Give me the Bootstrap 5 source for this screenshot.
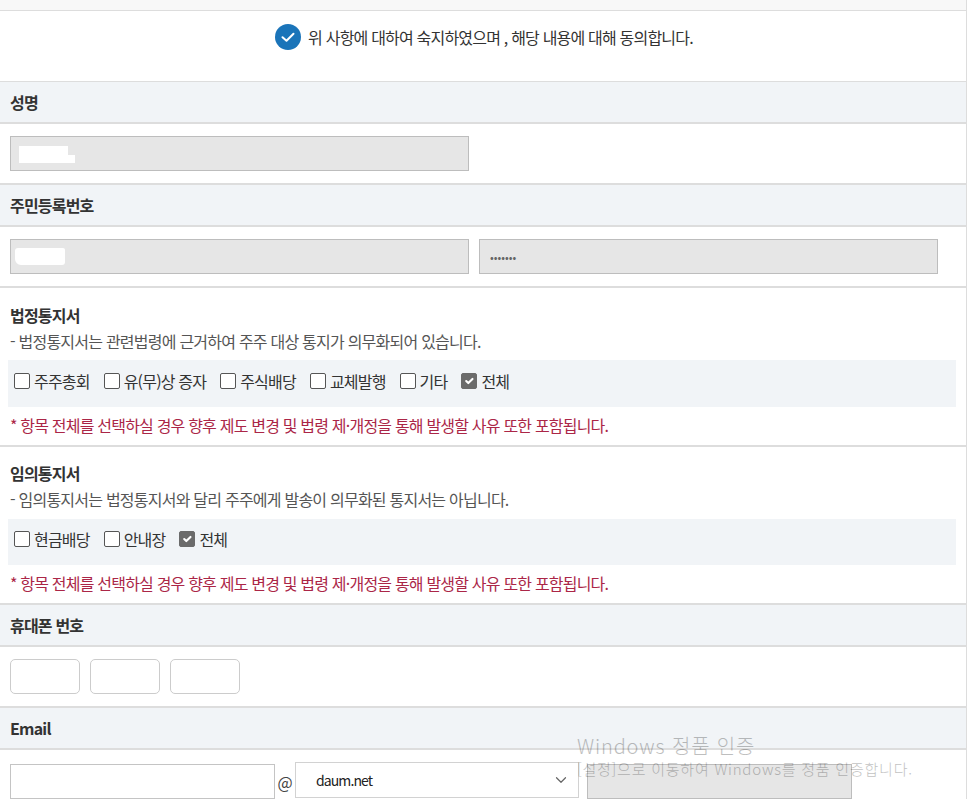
<!DOCTYPE html>
<html lang="ko">
<head>
<meta charset="utf-8">
<title>통지서 수신 동의</title>
<link rel="stylesheet" href="https://cdn.jsdelivr.net/npm/bootstrap@5.3.0/dist/css/bootstrap.min.css">
<style>
html, body { height: 811px; overflow: hidden; background: #fff; }
body { font-family: "Noto Sans CJK KR", "Noto Sans", sans-serif; font-size: 16px; color: #333; letter-spacing: -0.8px; line-height: 22px; }
.sheet { width: 967px; border-right: 1px solid #ddd; }
.topstrip { height: 11px; background: #f8f8f8; border-bottom: 1px solid #ddd; }
.agree { height: 70px; padding-bottom: 18px; padding-left: 2px; color: #333; gap: 7px; }
.agree svg { flex: none; }
.head-row { height: 44px; padding: 0 10px; background: #f1f4f7; border-top: 2px solid #ddd; border-bottom: 2px solid #ddd; font-weight: 700; color: #333; }
.head-first { height: 43px; border-top-width: 1px; }
.entry { padding: 12px 10px; gap: 10px; height: 59px; }
.fld { height: 35px; border-radius: 0; font-size: 13px; padding: 0 10px; border: 1px solid #c4c4c4; letter-spacing: 0; color: #333; }
.fld[readonly] { background: #e6e6e6; border-color: #bdbdbd; }
.fld-secret { color: #666; font-size: 11px; }
.w459 { width: 459px; flex: none; }
.w70 { width: 70px; flex: none; border-radius: 5px; border-color: #ccc; }
.w265 { width: 265px; flex: none; }
.holder { position: relative; }
.blot { position: absolute; background: #fff; }
.blot-a { left: 9px; top: 10px; width: 49px; height: 17px; }
.blot-a2 { left: 9px; top: 19px; width: 56px; height: 8px; }
.blot-b { left: 5px; top: 9px; width: 50px; height: 17px; border-radius: 3px 2px 3px 6px; }
.notice { border-top: 2px solid #ddd; padding: 16px 10px 0; }
.notice-1 { height: 159px; }
.notice-2 { height: 158px; padding-top: 15px; }
.notice-title { font-weight: 700; color: #333; margin-bottom: 4px; }
.notice-desc { color: #555; margin-bottom: 8px; letter-spacing: -0.77px; }
.notice-2 .notice-desc { margin-bottom: 9px; }
.optbox { margin: 0 0 7px -2px; width: 948px; height: 47px; background: #f1f4f7; padding: 0 7px 5px 6px; gap: 14px; color: #333; }
.notice-2 .optbox { height: 46px; padding-bottom: 6px; }
.optbox .form-check-input { width: 16px; height: 16px; margin: 0 4px 0 0; border: 1px solid #555; border-radius: 2px; float: none; flex: none; box-shadow: none; }
.optbox .form-check-input:checked { background-color: #6b6b6b; border-color: #6b6b6b; }
.optbox label { margin: 0; }
.warn { color: #ab2647; }
.at-sign { width: 20px; text-align: center; color: #444; letter-spacing: 0; font-size: 16px; }
.mail-row { padding: 14px 10px 0; gap: 0; }
.mail-select { width: 284px; height: 36px; margin-top: -3px; flex: none; border: 1px solid #d2d2d2; border-radius: 0; padding: 0 30px 0 20px; font-size: 14px; color: #222; letter-spacing: -0.9px; background-position: right 9px center; background-image: url("data:image/svg+xml,%3csvg xmlns='http://www.w3.org/2000/svg' viewBox='0 0 16 16'%3e%3cpath fill='none' stroke='%23666' stroke-linecap='round' stroke-linejoin='round' stroke-width='1.6' d='m2 5 6 6 6-6'/%3e%3c/svg%3e"); }
.mail-extra { margin-left: 8px; }
.winmark { position: absolute; left: 577px; top: 734px; color: #000; opacity: .25; pointer-events: none; letter-spacing: 0; }
.winmark-h { font-size: 20px; line-height: 24px; letter-spacing: .85px; font-weight: 300; }
.winmark-s { font-size: 15px; line-height: 20px; margin-top: 1px; letter-spacing: .77px; white-space: nowrap; font-weight: 300; }
</style>
</head>
<body>
<div class="sheet">
  <div class="topstrip"></div>
  <div class="agree d-flex align-items-center justify-content-center">
    <svg width="26" height="26" viewBox="0 0 26 26" aria-hidden="true"><circle cx="13" cy="13" r="13" fill="#1a74b9"/><path d="M7.5 13.2l4 3.6 7-7" fill="none" stroke="#fff" stroke-width="2" stroke-linecap="round" stroke-linejoin="round"/></svg>
    <span>위 사항에 대하여 숙지하였으며 , 해당 내용에 대해 동의합니다.</span>
  </div>

  <div class="head-row head-first d-flex align-items-center">성명</div>
  <div class="entry d-flex">
    <div class="holder">
      <input class="form-control fld w459" type="text" readonly aria-label="성명">
      <span class="blot blot-a"></span><span class="blot blot-a2"></span>
    </div>
  </div>

  <div class="head-row d-flex align-items-center">주민등록번호</div>
  <div class="entry d-flex">
    <div class="holder">
      <input class="form-control fld w459" type="text" readonly aria-label="주민등록번호 앞자리">
      <span class="blot blot-b"></span>
    </div>
    <input class="form-control fld fld-secret w459" type="password" value="1234567" readonly aria-label="주민등록번호 뒷자리">
  </div>

  <div class="notice notice-1">
    <div class="notice-title">법정통지서</div>
    <div class="notice-desc">- 법정통지서는 관련법령에 근거하여 주주 대상 통지가 의무화되어 있습니다.</div>
    <div class="optbox d-flex align-items-center">
      <label class="d-flex align-items-center"><input class="form-check-input" type="checkbox">주주총회</label>
      <label class="d-flex align-items-center"><input class="form-check-input" type="checkbox">유(무)상 증자</label>
      <label class="d-flex align-items-center"><input class="form-check-input" type="checkbox">주식배당</label>
      <label class="d-flex align-items-center"><input class="form-check-input" type="checkbox">교체발행</label>
      <label class="d-flex align-items-center"><input class="form-check-input" type="checkbox">기타</label>
      <label class="d-flex align-items-center"><input class="form-check-input" type="checkbox" checked>전체</label>
    </div>
    <div class="warn">* 항목 전체를 선택하실 경우 향후 제도 변경 및 법령 제·개정을 통해 발생할 사유 또한 포함됩니다.</div>
  </div>

  <div class="notice notice-2">
    <div class="notice-title">임의통지서</div>
    <div class="notice-desc">- 임의통지서는 법정통지서와 달리 주주에게 발송이 의무화된 통지서는 아닙니다.</div>
    <div class="optbox d-flex align-items-center">
      <label class="d-flex align-items-center"><input class="form-check-input" type="checkbox">현금배당</label>
      <label class="d-flex align-items-center"><input class="form-check-input" type="checkbox">안내장</label>
      <label class="d-flex align-items-center"><input class="form-check-input" type="checkbox" checked>전체</label>
    </div>
    <div class="warn">* 항목 전체를 선택하실 경우 향후 제도 변경 및 법령 제·개정을 통해 발생할 사유 또한 포함됩니다.</div>
  </div>

  <div class="head-row d-flex align-items-center">휴대폰 번호</div>
  <div class="entry d-flex">
    <input class="form-control fld w70" type="text" aria-label="휴대폰 앞자리">
    <input class="form-control fld w70" type="text" aria-label="휴대폰 가운데자리">
    <input class="form-control fld w70" type="text" aria-label="휴대폰 뒷자리">
  </div>

  <div class="head-row d-flex align-items-center">Email</div>
  <div class="mail-row d-flex align-items-center">
    <input class="form-control fld w265" type="text" aria-label="이메일 아이디">
    <span class="at-sign">@</span>
    <select class="form-select mail-select" aria-label="이메일 도메인"><option>daum.net</option></select>
    <input class="form-control fld w265 mail-extra" type="text" readonly aria-label="이메일 도메인 직접입력">
  </div>
</div>
<div class="winmark">
  <div class="winmark-h">Windows 정품 인증</div>
  <div class="winmark-s">[설정]으로 이동하여 Windows를 정품 인증합니다.</div>
</div>
<script src="https://cdn.jsdelivr.net/npm/bootstrap@5.3.0/dist/js/bootstrap.bundle.min.js"></script>
</body>
</html>
